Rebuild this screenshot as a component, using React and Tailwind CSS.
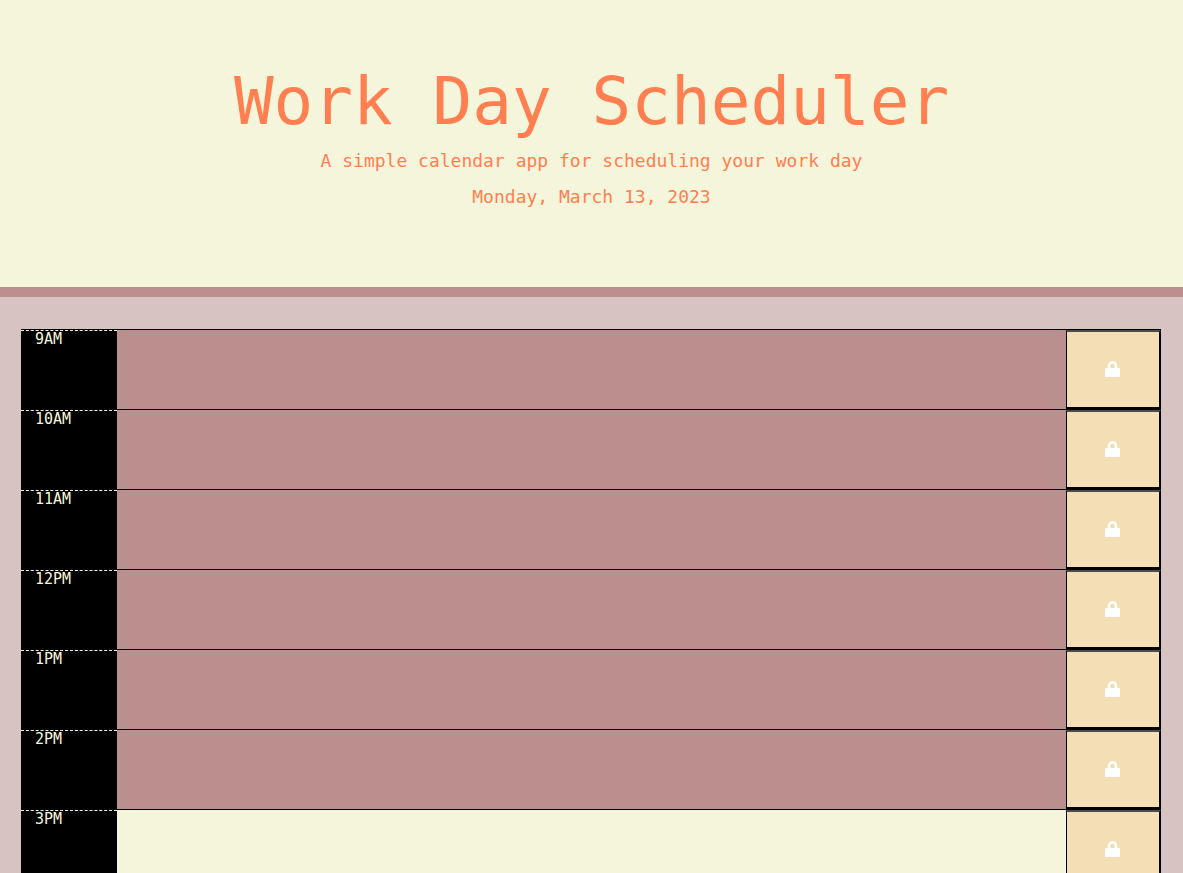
import React from "react";

const CURRENT_HOUR = 15;
const HOURS = [9, 10, 11, 12, 13, 14, 15];

function label(hour) {
  return `${hour > 12 ? hour - 12 : hour}${hour < 12 ? "AM" : "PM"}`;
}

function LockIcon() {
  return (
    <svg viewBox="0 0 16 16" className="size-4" fill="none" aria-hidden="true">
      <path d="M4 8V4.9a3.5 3.5 0 0 1 7 0V8" stroke="currentColor" strokeWidth="2.6" />
      <rect x="0" y="7" width="15" height="9" rx="1.2" fill="currentColor" />
    </svg>
  );
}

function TimeBlock({ hour }) {
  const id = `hour-${hour}`;
  const past = hour < CURRENT_HOUR;
  return (
    <div className="flex h-20 border-t border-black">
      <label
        htmlFor={id}
        className="w-24 shrink-0 border-t border-dashed border-[#f5f5dc] bg-black pl-3.5 text-[15px] leading-4 text-[#f5f5dc]"
      >
        {label(hour)}
      </label>
      <textarea
        id={id}
        className={`min-w-0 flex-1 resize-none px-3 text-[15px] text-black outline-none ${
          past ? "bg-[#bc8f8f]" : "bg-[#f5f5dc]"
        }`}
      />
      <button
        type="button"
        aria-label={`Save ${label(hour)}`}
        className="flex w-1/12 shrink-0 items-center justify-center border-y-2 border-r-2 border-l border-black border-t-[#4c4c4c] bg-[#f3deb5] pb-0.5 text-white"
      >
        <LockIcon />
      </button>
    </div>
  );
}

export default function App() {
  return (
    <div className="min-h-screen bg-[#d8c3c3] font-['Consolas','DejaVu_Sans_Mono',monospace]">
      <header className="border-b-10 border-[#bc8f8f] bg-[#f5f5dc] px-4 pt-16 pb-18 text-center text-[#ff7f50]">
        <h1 className="mb-1 text-[66px] leading-[75px]">Work Day Scheduler</h1>
        <p className="text-[18px] leading-9">A simple calendar app for scheduling your work day</p>
        <p className="text-[18px] leading-9">Monday, March 13, 2023</p>
      </header>
      <main className="py-8 pr-[22px] pl-[21px]">
        {HOURS.map((hour) => (
          <TimeBlock key={hour} hour={hour} />
        ))}
      </main>
    </div>
  );
}
